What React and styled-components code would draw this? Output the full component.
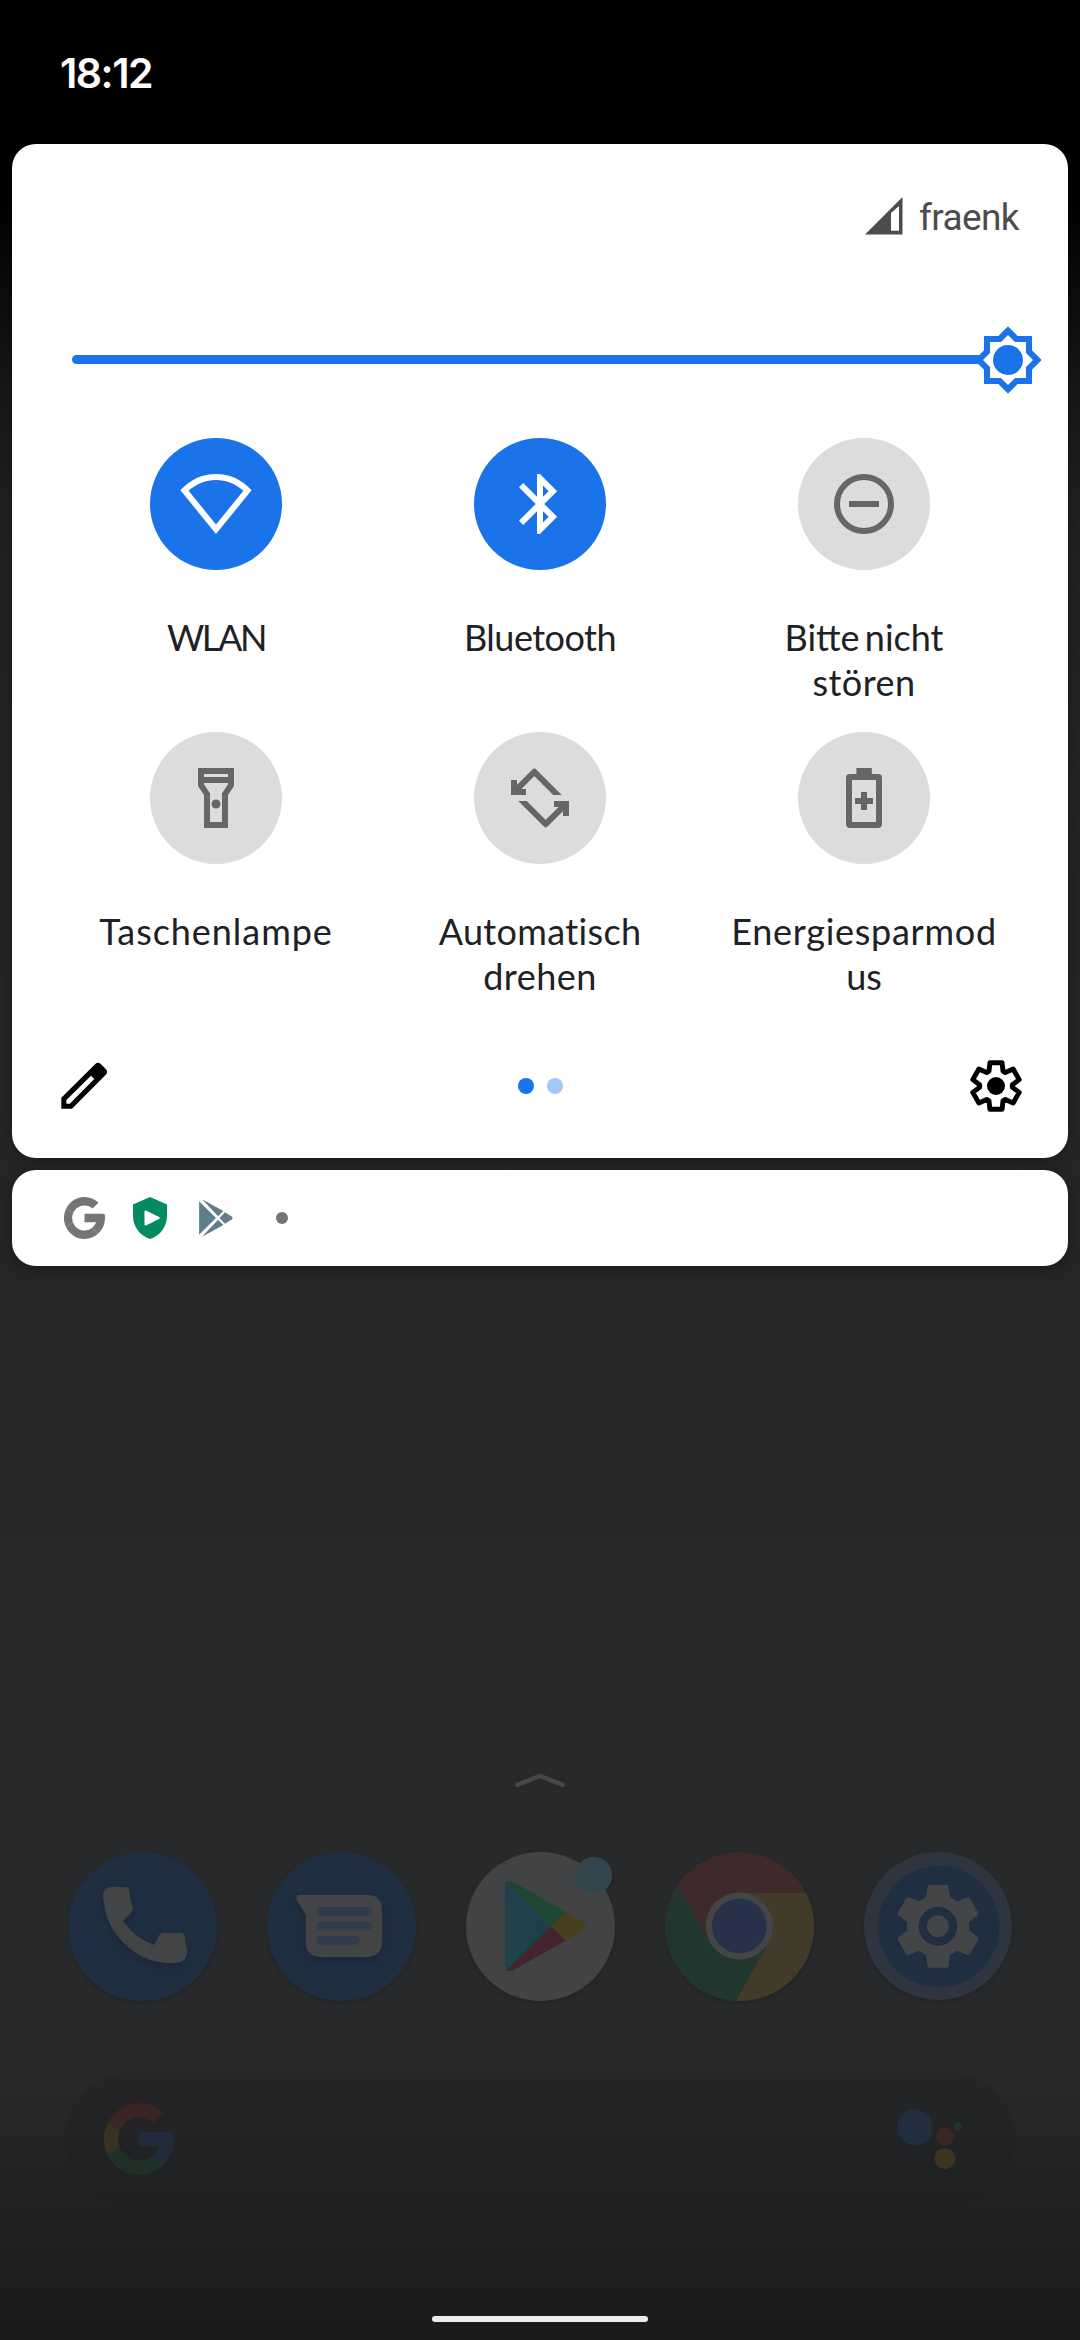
import React from "react";
import styled, { createGlobalStyle } from "styled-components";

const BLUE = "#1a73e8";

const GlobalStyle = createGlobalStyle`
  *, *::before, *::after { box-sizing: border-box; }
  body { margin: 0; background: #000; }
  svg { display: block; flex: none; }
`;

const Screen = styled.main`
  width: 1080px;
  height: 2340px;
  overflow: hidden;
  display: flex;
  flex-direction: column;
  font-family: Lato, "Open Sans", sans-serif;
  background: linear-gradient(
    180deg,
    #000 0, #000 190px, #0b0c0c 290px, #17181a 400px, #1e2021 510px,
    #222324 700px, #242527 1000px, #252628 1400px, #27292a 1800px, #28292b 2060px,
    #222325 2170px, #1e1f20 2250px, #1a1a1c 2340px
  );
`;

const StatusBar = styled.header`
  height: 144px;
  flex: none;
  padding: 48px 60px 0;
`;

const Clock = styled.time`
  display: block;
  color: #fff;
  font-family: Inter, sans-serif;
  font-size: 41px;
  line-height: 50px;
  font-weight: 600;
  letter-spacing: -1.5px;
`;

const Card = styled.section`
  flex: none;
  margin: 0 12px;
  border-radius: 24px;
  background: #fff;
  box-shadow: 0 3px 14px rgba(0, 0, 0, 0.28);
`;

const QuickPanel = styled(Card)`
  height: 1014px;
  display: flex;
  flex-direction: column;
`;

const CarrierRow = styled.div`
  height: 182px;
  padding: 50px 49px 0 0;
  display: flex;
  justify-content: flex-end;
  align-items: flex-start;
  gap: 16px;
  color: #4c4c4c;
`;

const CarrierName = styled.span`
  margin-top: 1px;
  font-family: Roboto, sans-serif;
  font-size: 37px;
  line-height: 46px;
  letter-spacing: -0.6px;
`;

const SignalIcon = styled.svg`
  width: 38px;
  height: 38px;
  margin-top: 3px;
`;

const SliderRow = styled.div`
  height: 68px;
  padding: 0 26px 0 60px;
  display: flex;
  align-items: center;
`;

const Track = styled.div`
  flex: 1;
  height: 9px;
  border-radius: 5px;
  background: ${BLUE};
  margin: 0 -8px 1px 0;
`;

const TileGrid = styled.div`
  margin-top: 44px;
  padding: 0 42px;
  display: grid;
  grid-template-columns: repeat(3, 324px);
  grid-auto-rows: 294px;
`;

const Tile = styled.div`
  display: flex;
  flex-direction: column;
  align-items: center;
`;

const TileDisc = styled.button`
  width: 132px;
  height: 132px;
  padding: 0;
  border: 0;
  border-radius: 50%;
  display: grid;
  place-items: center;
  background: ${(p) => (p.$on ? BLUE : "#dcdcdc")};
  color: ${(p) => (p.$on ? "#fff" : "#666")};
`;

const TileLabel = styled.div`
  margin-top: 45px;
  display: flex;
  flex-direction: column;
  align-items: center;
  color: #202124;
  font-size: 36px;
  line-height: 45px;
`;

const LabelLine = styled.span`
  white-space: nowrap;
  word-spacing: -4px;
  letter-spacing: ${(p) => p.$track}px;
`;

const PanelFooter = styled.footer`
  height: 120px;
  padding: 0 41px 0 48px;
  display: grid;
  grid-template-columns: 1fr auto 1fr;
  align-items: center;
`;

const FooterEnd = styled.div`
  display: flex;
  justify-content: flex-end;
`;

const Pager = styled.div`
  display: flex;
  gap: 13px;
  margin-right: 7px;
`;

const PageDot = styled.i`
  width: 16px;
  height: 16px;
  border-radius: 50%;
  background: ${(p) => (p.$current ? BLUE : "#a3c7f6")};
`;

const NotificationStrip = styled(Card)`
  height: 96px;
  margin-top: 12px;
  padding-left: 39px;
  display: flex;
  align-items: center;
`;

const Slot = styled.div`
  width: 66px;
  display: grid;
  place-items: center;
`;

const MoreDot = styled.i`
  width: 12px;
  height: 12px;
  border-radius: 50%;
  background: #747577;
`;

const Home = styled.div`
  flex: 1;
  display: flex;
  flex-direction: column;
  align-items: center;
`;

const Chevron = styled.svg`
  width: 54px;
  height: 20px;
  margin-top: 504px;
`;

const Dock = styled.nav`
  width: 944px;
  margin-top: 62px;
  display: flex;
  justify-content: space-between;
  svg {
    overflow: visible;
    filter: drop-shadow(0 2px 2px rgba(0, 0, 0, 0.15));
  }
`;

const Glyph = styled.g`
  filter: drop-shadow(0 12px 12px rgba(20, 24, 40, 0.35));
`;

const SearchPill = styled.div`
  width: 950px;
  height: 134px;
  margin-top: 71px;
  padding: 0 53px 0 39px;
  border-radius: 67px;
  display: flex;
  align-items: center;
  justify-content: space-between;
  background: linear-gradient(180deg, rgba(0, 0, 0, 0.075), rgba(0, 0, 0, 0.035));
`;

const HomeHandle = styled.div`
  width: 216px;
  height: 6px;
  margin-top: 110px;
  border-radius: 3px;
  background: #ececec;
`;

const GEAR_OUTER =
  "M19.43 12.98c.04-.32.07-.64.07-.98 0-.34-.03-.66-.07-.98l2.11-1.65c.19-.15.24-.42.12-.64l-2-3.46c-.09-.16-.26-.25-.44-.25-.06 0-.12.01-.17.03l-2.49 1c-.52-.4-1.08-.73-1.69-.98l-.38-2.65C14.46 2.18 14.25 2 14 2h-4c-.25 0-.46.18-.49.42l-.38 2.65c-.61.25-1.17.59-1.69.98l-2.49-1c-.06-.02-.12-.03-.18-.03-.17 0-.34.09-.43.25l-2 3.46c-.13.22-.07.49.12.64l2.11 1.65c-.04.32-.07.65-.07.98 0 .33.03.66.07.98l-2.11 1.65c-.19.15-.24.42-.12.64l2 3.46c.09.16.26.25.44.25.06 0 .12-.01.17-.03l2.49-1c.52.4 1.08.73 1.69.98l.38 2.65c.03.24.24.42.49.42h4c.25 0 .46-.18.49-.42l.38-2.65c.61-.25 1.17-.59 1.69-.98l2.49 1c.06.02.12.03.18.03.17 0 .34-.09.43-.25l2-3.46c.12-.22.07-.49-.12-.64l-2.11-1.65z";

// Six teeth, each one the same four corners turned by 60 degrees.
const GEAR_OUTLINE = Array.from({ length: 6 })
  .flatMap((_, k) => {
    const a = (k * Math.PI) / 3;
    return [
      [-7, -14.8],
      [-6.1, -23.3],
      [6.1, -23.3],
      [7, -14.8],
    ].map(([x, y]) =>
      [x * Math.cos(a) - y * Math.sin(a), x * Math.sin(a) + y * Math.cos(a)]
        .map((n) => n.toFixed(2))
        .join(",")
    );
  })
  .join(" ");

const TileSvg = ({ children, unit = 72 }) => (
  <svg width="72" height="72" viewBox={`0 0 ${unit} ${unit}`} fill="currentColor">
    {children}
  </svg>
);

const WifiIcon = () => (
  <TileSvg>
    <path
      fillRule="evenodd"
      d="M.4 22.3C10 11.5 22.5 6 36 6s26 5.500 35.600 16.300L36 66zM8.600 22.800 36 56.400 63.400 22.800C55.500 15.800 46 12 36 12S16.500 15.800 8.600 22.800z"
    />
  </TileSvg>
);

const BluetoothIcon = () => (
  <TileSvg unit={24}>
    <path d="M17.71 7.71L12 2h-1v7.590L6.410 5 5 6.410 10.590 12 5 17.590 6.410 19 11 14.410V22h1l5.710-5.710-4.300-4.290 4.300-4.290zM13 5.830l1.880 1.880L13 9.590V5.830zm1.880 10.460L13 18.170v-3.760l1.880 1.880z" />
  </TileSvg>
);

const DndIcon = () => (
  <TileSvg unit={24}>
    <circle cx="12" cy="12" r="9" fill="none" stroke="currentColor" strokeWidth="2" />
    <rect x="7" y="11" width="10" height="2" />
  </TileSvg>
);

const TorchIcon = () => (
  <TileSvg unit={24}>
    <path
      fillRule="evenodd"
      d="M6 2v6l2 3v11h8V11l2-3V2H6zm10 2v1H8V4h8zm-2 6.400V20h-4v-9.610l-2-3V7h8v.390l-2 3.010z"
    />
    <circle cx="12" cy="14" r="1.500" />
  </TileSvg>
);

const RotateHalf = () => (
  <>
    <path
      clipPath="url(#rotate-half)"
      d="M10.500 29.600 30.300 9.800 60 39.500"
      fill="none"
      stroke="currentColor"
      strokeWidth="6"
      strokeLinejoin="round"
    />
    <path d="M7 18h6v9h9v6H7z" />
  </>
);

const RotateIcon = () => (
  <TileSvg>
    <clipPath id="rotate-half">
      <rect width="72" height="33" />
    </clipPath>
    <RotateHalf />
    <g transform="rotate(180 36 36)">
      <RotateHalf />
    </g>
  </TileSvg>
);

const BatteryIcon = () => (
  <TileSvg>
    <path
      fillRule="evenodd"
      d="M28.400 6h15.400v6H50q4 0 4 4v46q0 4-4 4H22q-4 0-4-4V16q0-4 4-4h6.400zM24 18v42h24V18z"
    />
    <path d="M33 30h6v6h6v6h-6v6h-6v-6h-6v-6h6z" />
  </TileSvg>
);

const BrightnessThumb = () => (
  <svg width="68" height="68" viewBox="-34 -34 68 68">
    <path
      fill={BLUE}
      d="M0-33.700 9.700-24H24v14.300L33.700 0 24 9.700V24H9.700L0 33.700-9.700 24H-24V9.700L-33.700 0-24-9.700V-24h14.300z"
    />
    <path
      fill="#fff"
      d="M0-25 7-18h11v11L25 0l-7 7v11H7L0 25l-7-7h-11V7l-7-7 7-7v-11h11z"
    />
    <circle r="15" fill={BLUE} />
  </svg>
);

const PencilIcon = () => (
  <svg width="50" height="48" viewBox="0 0 50 48">
    <path
      fillRule="evenodd"
      d="M1.300 46.700v-11L35.300 1.900q2.700-2.400 5.400 0l5.300 5.300q2.300 2.700 0 5.400L12 46.700zM6.400 41.700h3.400L34.300 17 31 13.700 6.400 38z"
    />
  </svg>
);

const SettingsOutline = () => (
  <svg width="62" height="62" viewBox="-31 -31 62 62">
    <polygon
      points={GEAR_OUTLINE}
      fill="none"
      stroke="#000"
      strokeWidth="4.900"
      strokeLinejoin="round"
    />
    <circle r="9" />
  </svg>
);

const G_PARTS = [
  "M43.611 20.083H42V20H24v8h11.303a12.040 12.040 0 0 1-4.087 5.571l6.190 5.238C36.971 39.205 44 34 44 24c0-1.341-.138-2.650-.389-3.917z",
  "M6.306 14.691l6.571 4.819C14.655 15.108 18.961 12 24 12c3.059 0 5.842 1.154 7.961 3.039l5.657-5.657C34.046 6.053 29.268 4 24 4 16.318 4 9.656 8.337 6.306 14.691z",
  "M24 44c5.166 0 9.860-1.977 13.409-5.192l-6.190-5.238A11.910 11.910 0 0 1 24 36c-5.202 0-9.619-3.317-11.283-7.946l-6.522 5.025C9.505 39.556 16.227 44 24 44z",
  "M12.717 28.054A12 12 0 0 1 12.877 19.510L6.306 14.691A20 20 0 0 0 6.195 33.079z",
];

const GoogleG = ({ width, height, colors }) => (
  <svg width={width} height={height} viewBox="4 4 40 40" preserveAspectRatio="none">
    {G_PARTS.map((d, i) => (
      <path key={i} d={d} fill={colors[i]} />
    ))}
  </svg>
);

const ShieldIcon = () => (
  <svg width="34" height="42" viewBox="0 0 34 42">
    <path fill="#048a60" d="M17 0l17 7.600V19c0 10.500-7 20-17 23C7 39 0 29.500 0 19V7.600z" />
    <path
      fill="#fff"
      stroke="#fff"
      strokeWidth="2"
      strokeLinejoin="round"
      d="M12.500 14.500v13l13.200-6.500z"
    />
  </svg>
);

const PlayMono = () => (
  <svg width="34" height="38" viewBox="0 0 34 38" fill="#5f7d8a">
    <path d="M.1 2.200 17 19 .1 35.800z" />
    <path d="M3.100.3 24.300 12l-5.200 5.300z" />
    <path d="M3.100 37.700 24.300 26l-5.200-5.300z" />
    <path d="M26 13.200l7 4.600q1.200 1.200 0 2.400l-7 4.600L20.600 19z" />
  </svg>
);

const PhoneApp = () => (
  <svg width="149" height="149" viewBox="84 336 447 447">
    <circle cx="307.500" cy="559.500" r="223.500" fill="#202e41" />
    <Glyph>
      <path
        fill="#434445"
        d="M214 441H258Q266 441 267 450 269 474 278 500 280 510 274 518L249 543Q285 595 343 615L355 590Q360 579 368 578H424Q432 579 434 588 436 612 441 630V640Q438 664 412 668 400 670 380 669 320 668 265 622 195 565 189 466 190 445 214 441Z"
      />
    </Glyph>
    <path d="M222 576 250 545M318 654 342 614" stroke="#3f4042" strokeWidth="5" />
  </svg>
);

const MessagesApp = () => (
  <svg width="149" height="149" viewBox="681 336 447 447">
    <circle cx="904.500" cy="559.500" r="223.500" fill="#202e41" />
    <Glyph>
      <path
        fill="#434445"
        d="M778 465H985Q1024 467 1026 505V610Q1024 648 985 651H838Q800 648 798 612V526L769 478Q766 466 778 465Z"
      />
    </Glyph>
    <g fill="#323b49">
      <rect x="829" y="501" width="167" height="27" rx="13" />
      <rect x="829" y="545" width="167" height="26" rx="13" />
      <rect x="829" y="588" width="130" height="26" rx="13" />
    </g>
  </svg>
);

const PlayApp = () => (
  <svg width="149" height="149" viewBox="1278 336 447 447">
    <defs>
      <linearGradient id="play-left" x1="0" y1="1" x2="1" y2="0">
        <stop offset="0" stopColor="#1f444a" />
        <stop offset="1" stopColor="#203c4b" />
      </linearGradient>
    </defs>
    <circle cx="1501.500" cy="559.500" r="223.500" fill="#424344" />
    <path fill="url(#play-left)" d="M1395 436Q1395 428 1400 426L1533 558 1402 690Q1395 686 1395 678Z" />
    <path fill="#1f4632" d="M1398 427Q1406 419 1418 425L1577 516 1533 558Z" />
    <path fill="#42242c" d="M1400 690Q1408 696 1420 690L1577 602 1533 558Z" />
    <path fill="#47401f" d="M1577 516 1629 546Q1647 559 1629 573L1577 602 1533 558Z" />
    <circle cx="1661" cy="406" r="55.500" fill="#32454d" />
  </svg>
);

const ChromeApp = () => (
  <svg width="149" height="149" viewBox="375 336 447 447">
    <circle cx="598.500" cy="559.500" r="223.500" fill="#3e2a2b" />
    <path fill="#21362f" d="M412 438A223.500 223.500 0 0 0 587 783L686 608 598 559 510 608Z" />
    <path fill="#433b2a" d="M798 458A223.500 223.500 0 0 1 587 783L686 608 598 559V458Z" />
    <circle cx="598" cy="558" r="101" fill="#444546" />
    <circle cx="598" cy="558" r="82" fill="#273149" />
  </svg>
);

const SettingsApp = () => (
  <svg width="148" height="148" viewBox="972 336 444 444">
    <circle cx="1194" cy="558" r="222" fill="#2e353f" />
    <circle cx="1196" cy="560" r="182" fill="#202e41" />
    <g transform="translate(1044.600 409) scale(12.450)">
      <path fill="#434546" d={GEAR_OUTER} />
    </g>
    <circle cx="1194" cy="559" r="58" fill="#202e41" />
    <circle cx="1194" cy="559" r="33" fill="#434546" />
  </svg>
);

const AssistantIcon = () => (
  <svg width="66" height="62" viewBox="896 2108 66 62">
    <circle cx="915" cy="2127.300" r="18" fill="#222d3e" />
    <circle cx="945" cy="2136.300" r="9" fill="#3c2526" />
    <circle cx="958" cy="2126" r="4.300" fill="#22342a" />
    <circle cx="945" cy="2158.700" r="10.500" fill="#3b341e" />
  </svg>
);

const TILES = [
  { icon: WifiIcon, on: true, lines: [["WLAN", -2.4]] },
  { icon: BluetoothIcon, on: true, lines: [["Bluetooth", -0.5]] },
  { icon: DndIcon, lines: [["Bitte nicht", 0], ["stören", 0.45]] },
  { icon: TorchIcon, lines: [["Taschenlampe", 0.95]] },
  { icon: RotateIcon, lines: [["Automatisch", 0.35], ["drehen", 0.5]] },
  { icon: BatteryIcon, lines: [["Energiesparmod", 0.73], ["us", 0]] },
];

export default function App() {
  return (
    <>
      <GlobalStyle />
      <Screen>
        <StatusBar>
          <Clock>18:12</Clock>
        </StatusBar>

        <QuickPanel>
          <CarrierRow>
            <SignalIcon viewBox="0 0 38 38" fill="currentColor">
              <path fillRule="evenodd" d="M0 37.500 37.500 0V37.500zM26 16V33.700H34V9z" />
            </SignalIcon>
            <CarrierName>fraenk</CarrierName>
          </CarrierRow>

          <SliderRow>
            <Track />
            <BrightnessThumb />
          </SliderRow>

          <TileGrid>
            {TILES.map(({ icon: Icon, on, lines }) => (
              <Tile key={lines[0][0]}>
                <TileDisc $on={on}>
                  <Icon />
                </TileDisc>
                <TileLabel>
                  {lines.map(([text, track]) => (
                    <LabelLine key={text} $track={track}>
                      {text}
                    </LabelLine>
                  ))}
                </TileLabel>
              </Tile>
            ))}
          </TileGrid>

          <PanelFooter>
            <PencilIcon />
            <Pager>
              <PageDot $current />
              <PageDot />
            </Pager>
            <FooterEnd>
              <SettingsOutline />
            </FooterEnd>
          </PanelFooter>
        </QuickPanel>

        <NotificationStrip>
          <Slot>
            <GoogleG width={41} height={42} colors={["#747577", "#747577", "#747577", "#747577"]} />
          </Slot>
          <Slot>
            <ShieldIcon />
          </Slot>
          <Slot>
            <PlayMono />
          </Slot>
          <Slot>
            <MoreDot />
          </Slot>
        </NotificationStrip>

        <Home>
          <Chevron viewBox="0 0 54 20">
            <path
              d="M4.300 14.800 27 5.800l22.700 9"
              fill="none"
              stroke="#454647"
              strokeWidth="4.500"
              strokeLinecap="round"
            />
          </Chevron>
          <Dock>
            <PhoneApp />
            <MessagesApp />
            <PlayApp />
            <ChromeApp />
            <SettingsApp />
          </Dock>
          <SearchPill>
            <GoogleG width={70} height={72} colors={["#212b3c", "#3a2524", "#1f3026", "#39321e"]} />
            <AssistantIcon />
          </SearchPill>
          <HomeHandle />
        </Home>
      </Screen>
    </>
  );
}
